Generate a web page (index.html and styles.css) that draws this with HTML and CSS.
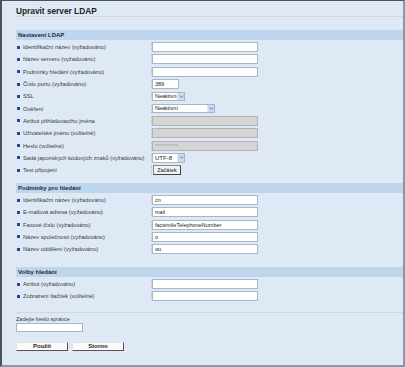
FILE: index.html
```html
<!DOCTYPE html>
<html lang="cs">
<head>
<meta charset="utf-8">
<title>Upravit server LDAP</title>
<link rel="stylesheet" href="styles.css">
</head>
<body>
<div class="page">
  <h1 class="title">Upravit server LDAP</h1>

  <section class="sec sec1">
    <div class="band">Nastavení LDAP</div>
    <div class="rows">
      <div class="row"><span class="label">Identifikační název (vyžadováno)</span><span class="ctl"><input class="text" type="text"></span></div>
      <div class="row"><span class="label">Název serveru (vyžadováno)</span><span class="ctl"><input class="text" type="text"></span></div>
      <div class="row"><span class="label">Podmínky hledání (vyžadováno)</span><span class="ctl"><input class="text" type="text"></span></div>
      <div class="row"><span class="label">Číslo portu (vyžadováno)</span><span class="ctl"><input class="text port" type="text" value="389"></span></div>
      <div class="row"><span class="label">SSL</span><span class="ctl"><span class="select s-short"><span class="val">Neaktivní</span><span class="arrow"><svg viewBox="0 0 6 6" width="5" height="5"><path d="M1 2 L3 4 L5 2" fill="none" stroke="#3b6fb5" stroke-width="1"/></svg></span></span></span></div>
      <div class="row"><span class="label">Ověření</span><span class="ctl"><span class="select s-long"><span class="val">Neaktivní</span><span class="arrow"><svg viewBox="0 0 6 6" width="5" height="5"><path d="M1 2 L3 4 L5 2" fill="none" stroke="#3b6fb5" stroke-width="1"/></svg></span></span></span></div>
      <div class="row"><span class="label">Atribut přihlašovacího jména</span><span class="ctl"><input class="text dis" type="text" disabled></span></div>
      <div class="row"><span class="label">Uživatelské jméno (volitelné)</span><span class="ctl"><input class="text dis" type="text" disabled></span></div>
      <div class="row"><span class="label">Heslo (volitelné)</span><span class="ctl"><input class="text dis pw" type="text" value="*********" disabled></span></div>
      <div class="row"><span class="label">Sada japonských kódových znaků (vyžadováno)</span><span class="ctl"><span class="select s-short utf"><span class="val">UTF-8</span><span class="arrow"><svg viewBox="0 0 6 6" width="5" height="5"><path d="M1 2 L3 4 L5 2" fill="none" stroke="#3b6fb5" stroke-width="1"/></svg></span></span></span></div>
      <div class="row"><span class="label">Test připojení</span><span class="ctl"><button class="small-btn" type="button">Začátek</button></span></div>
    </div>
  </section>

  <section class="sec sec2">
    <div class="band">Podmínky pro hledání</div>
    <div class="rows">
      <div class="row"><span class="label">Identifikační název (vyžadováno)</span><span class="ctl"><input class="text" type="text" value="cn"></span></div>
      <div class="row"><span class="label">E-mailová adresa (vyžadováno)</span><span class="ctl"><input class="text" type="text" value="mail"></span></div>
      <div class="row"><span class="label">Faxové číslo (vyžadováno)</span><span class="ctl"><input class="text" type="text" value="facsimileTelephoneNumber"></span></div>
      <div class="row"><span class="label">Název společnosti (vyžadováno)</span><span class="ctl"><input class="text" type="text" value="o"></span></div>
      <div class="row"><span class="label">Název oddělení (vyžadováno)</span><span class="ctl"><input class="text" type="text" value="ou"></span></div>
    </div>
  </section>

  <section class="sec sec3">
    <div class="band">Volby hledání</div>
    <div class="rows">
      <div class="row"><span class="label">Atribut (vyžadováno)</span><span class="ctl"><input class="text" type="text"></span></div>
      <div class="row"><span class="label">Zobrazení tlačítek (volitelné)</span><span class="ctl"><input class="text" type="text"></span></div>
    </div>
  </section>

  <div class="admin">
    <label class="admin-label">Zadejte heslo správce</label>
    <input class="text admin-input" type="password">
  </div>

  <div class="actions">
    <button class="btn" type="button">Použít</button>
    <button class="btn" type="button">Storno</button>
  </div>
</div>
</body>
</html>
```

FILE: styles.css
```css
* { box-sizing: border-box; }

html, body {
  margin: 0;
  padding: 0;
}

body {
  font-family: "Liberation Sans", Arial, sans-serif;
  color: #333;
}

.page {
  width: 405px;
  height: 367px;
  background: #dfe9f5;
  border-top: 1px solid #4d5259;
  border-left: 2px solid #4d5259;
  border-right: 2px solid #8a98a6;
  border-bottom: 2px solid #8a98a6;
  padding-left: 14px;
}

.title {
  margin: 0;
  padding-top: 5px;
  font-size: 8.3px;
  line-height: 10px;
  font-weight: bold;
  color: #1e1e1e;
  border-bottom: 1px solid #cbd7e3;
}

.sec1 { margin-top: 13px; }
.sec2 { margin-top: 6.7px; }
.sec3 { margin-top: 11.5px; }

.band {
  height: 10px;
  background: #bdd6ee;
  font-size: 6px;
  line-height: 10px;
  font-weight: bold;
  color: #1e2a38;
  padding-left: 2px;
}

.rows {
  padding-top: 1px;
}

.row {
  display: flex;
  align-items: center;
  height: 12.3px;
}

.label {
  width: 135px;
  display: flex;
  align-items: center;
  font-size: 5.7px;
  color: #363b42;
  white-space: nowrap;
  padding-left: 1px;
}

.label::before {
  content: "";
  width: 3px;
  height: 3px;
  background: #24498a;
  margin-right: 3px;
  flex: none;
}

.ctl {
  display: flex;
  align-items: center;
  border-left: 1px dotted #b9c5d2;
  height: 8px;
}

.text {
  width: 106px;
  height: 10px;
  margin: 0;
  padding: 0 2px;
  border: 1px solid #a7b7c8;
  background: #fff;
  font-family: "Liberation Sans", Arial, sans-serif;
  font-size: 5.5px;
  color: #222;
  outline: none;
}

.text.port { width: 27px; }

.text.dis {
  background: #d5d5d5;
  border-color: #b3b3b3;
}

.text.pw {
  color: #9a9a9a;
  letter-spacing: 0.5px;
}

.select {
  display: flex;
  height: 9px;
  border: 1px solid #a7b7c8;
  background: #fff;
  font-size: 5.5px;
  color: #222;
}

.s-short { width: 33px; }
.s-long { width: 63px; }
.utf { height: 10px; font-size: 6px; }

.val {
  flex: 1;
  padding-left: 2px;
  line-height: 7px;
  overflow: hidden;
}

.utf .val { line-height: 8px; }

.arrow {
  width: 7px;
  display: flex;
  align-items: center;
  justify-content: center;
  background: #c9dbef;
  border-left: 1px solid #dde6f1;
}

.small-btn {
  margin: 0 0 0 1px;
  width: 28px;
  height: 10px;
  padding: 0;
  font-family: "Liberation Sans", Arial, sans-serif;
  font-size: 5.5px;
  color: #222;
  background: #f3f3f3;
  border: 1px solid #8a8a8a;
  border-right-color: #444;
  border-bottom-color: #444;
}

.admin {
  margin-top: 9.4px;
  border-top: 1px solid #cbd7e3;
  padding-top: 2px;
  display: flex;
  flex-direction: column;
  align-items: flex-start;
}

.admin-label {
  font-size: 5.5px;
  line-height: 8px;
  color: #333;
}

.admin-input {
  width: 67px;
  height: 9px;
}

.actions {
  display: flex;
  gap: 4px;
  margin-top: 10px;
}

.btn {
  width: 52px;
  height: 9px;
  padding: 0;
  margin: 0;
  font-family: "Liberation Sans", Arial, sans-serif;
  font-size: 6px;
  font-weight: bold;
  color: #222;
  background: #fbfbfb;
  border: 1px solid #e2e2e2;
  border-right: 1px solid #555;
  border-bottom: 1px solid #555;
}
```
